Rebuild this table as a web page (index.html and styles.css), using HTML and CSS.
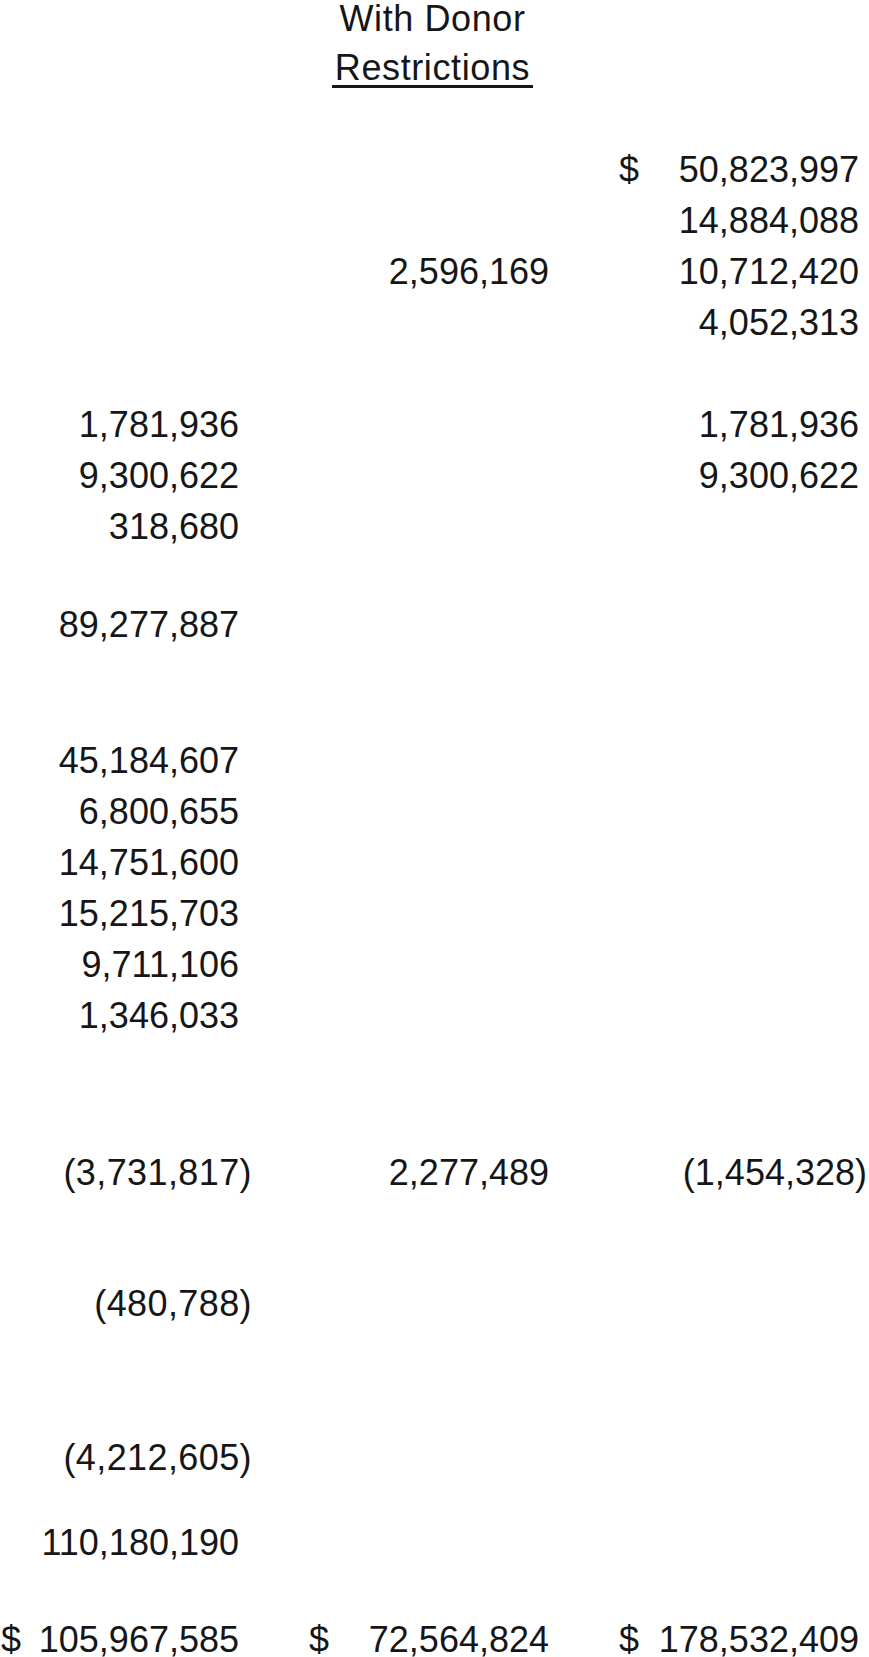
FILE: index.html
```html
<!DOCTYPE html>
<html lang="en">
<head>
<meta charset="utf-8">
<title>Net Assets With Donor Restrictions</title>
<link rel="stylesheet" href="styles.css">
</head>
<body>
<main class="sheet">
  <header class="row head">
    <div class="cell col2 title">
      <div class="title-line">With Donor</div>
      <div class="title-line second"><span class="ul">Restrictions</span></div>
    </div>
  </header>

  <section class="group g-a">
    <div class="row"><div class="cell col3"><span class="cur">$</span><span class="num">50,823,997</span></div></div>
    <div class="row"><div class="cell col3"><span class="num">14,884,088</span></div></div>
    <div class="row"><div class="cell col2"><span class="num">2,596,169</span></div><div class="cell col3"><span class="num">10,712,420</span></div></div>
    <div class="row"><div class="cell col3"><span class="num">4,052,313</span></div></div>
  </section>

  <section class="group g-b">
    <div class="row"><div class="cell col1"><span class="num">1,781,936</span></div><div class="cell col3"><span class="num">1,781,936</span></div></div>
    <div class="row"><div class="cell col1"><span class="num">9,300,622</span></div><div class="cell col3"><span class="num">9,300,622</span></div></div>
    <div class="row"><div class="cell col1"><span class="num">318,680</span></div></div>
  </section>

  <section class="group g-c">
    <div class="row"><div class="cell col1"><span class="num">89,277,887</span></div></div>
  </section>

  <section class="group g-d">
    <div class="row"><div class="cell col1"><span class="num">45,184,607</span></div></div>
    <div class="row"><div class="cell col1"><span class="num">6,800,655</span></div></div>
    <div class="row"><div class="cell col1"><span class="num">14,751,600</span></div></div>
    <div class="row"><div class="cell col1"><span class="num">15,215,703</span></div></div>
    <div class="row"><div class="cell col1"><span class="num">9,711,106</span></div></div>
    <div class="row"><div class="cell col1"><span class="num">1,346,033</span></div></div>
  </section>

  <section class="group g-e">
    <div class="row">
      <div class="cell col1"><span class="num neg">(3,731,817)</span></div>
      <div class="cell col2"><span class="num">2,277,489</span></div>
      <div class="cell col3"><span class="num neg neg-edge">(1,454,328)</span></div>
    </div>
  </section>

  <section class="group g-f">
    <div class="row"><div class="cell col1"><span class="num neg">(480,788)</span></div></div>
  </section>

  <section class="group g-g">
    <div class="row"><div class="cell col1"><span class="num neg">(4,212,605)</span></div></div>
  </section>

  <section class="group g-h">
    <div class="row"><div class="cell col1"><span class="num">110,180,190</span></div></div>
  </section>

  <section class="group g-i">
    <div class="row total">
      <div class="cell col1"><span class="cur">$</span><span class="num">105,967,585</span></div>
      <div class="cell col2"><span class="cur">$</span><span class="num">72,564,824</span></div>
      <div class="cell col3"><span class="cur">$</span><span class="num">178,532,409</span></div>
    </div>
  </section>
</main>
</body>
</html>
```

FILE: styles.css
```css
html, body {
  margin: 0;
  padding: 0;
  background: #ffffff;
  overflow: hidden;
}

body {
  width: 869px;
  height: 1657px;
  font-family: "Liberation Sans", Arial, sans-serif;
  font-size: 36px;
  color: #161616;
}

.sheet {
  display: flex;
  flex-direction: column;
  padding-left: 1px;
}

.row {
  display: grid;
  grid-template-columns: 238px 240px 240px;
  column-gap: 70px;
  height: 51px;
  line-height: 51px;
  white-space: nowrap;
}

.cell {
  display: flex;
  justify-content: flex-end;
  align-items: baseline;
}

.cell .cur + .num { margin-left: auto; }
.cell:has(.cur) { justify-content: space-between; }

.col1 { grid-column: 1; }
.col2 { grid-column: 2; }
.col3 { grid-column: 3; }

.neg {
  margin-right: -13px;
  letter-spacing: 0.4px;
}
.neg.neg-edge {
  margin-right: -8px;
  letter-spacing: 0;
}

/* header */
.head {
  height: auto;
  line-height: 38px;
}

.title {
  display: block;
  text-align: center;
  padding-left: 7px;
  letter-spacing: 0.6px;
}

.title-line {
  height: 38px;
  line-height: 38px;
}

.title-line.second { margin-top: 11px; }

.ul {
  display: inline-block;
  line-height: 34px;
  padding: 0 3px;
  border-bottom: 3px solid #161616;
}

/* vertical rhythm between groups */
.g-a { margin-top: 57px; }
.g-b { margin-top: 51px; }
.g-c { margin-top: 47px; }
.g-d { margin-top: 85px; }
.g-e { margin-top: 106px; }
.g-f { margin-top: 80px; }
.g-g { margin-top: 103px; }
.g-h { margin-top: 34px; }
.g-i { margin-top: 46px; }
```
